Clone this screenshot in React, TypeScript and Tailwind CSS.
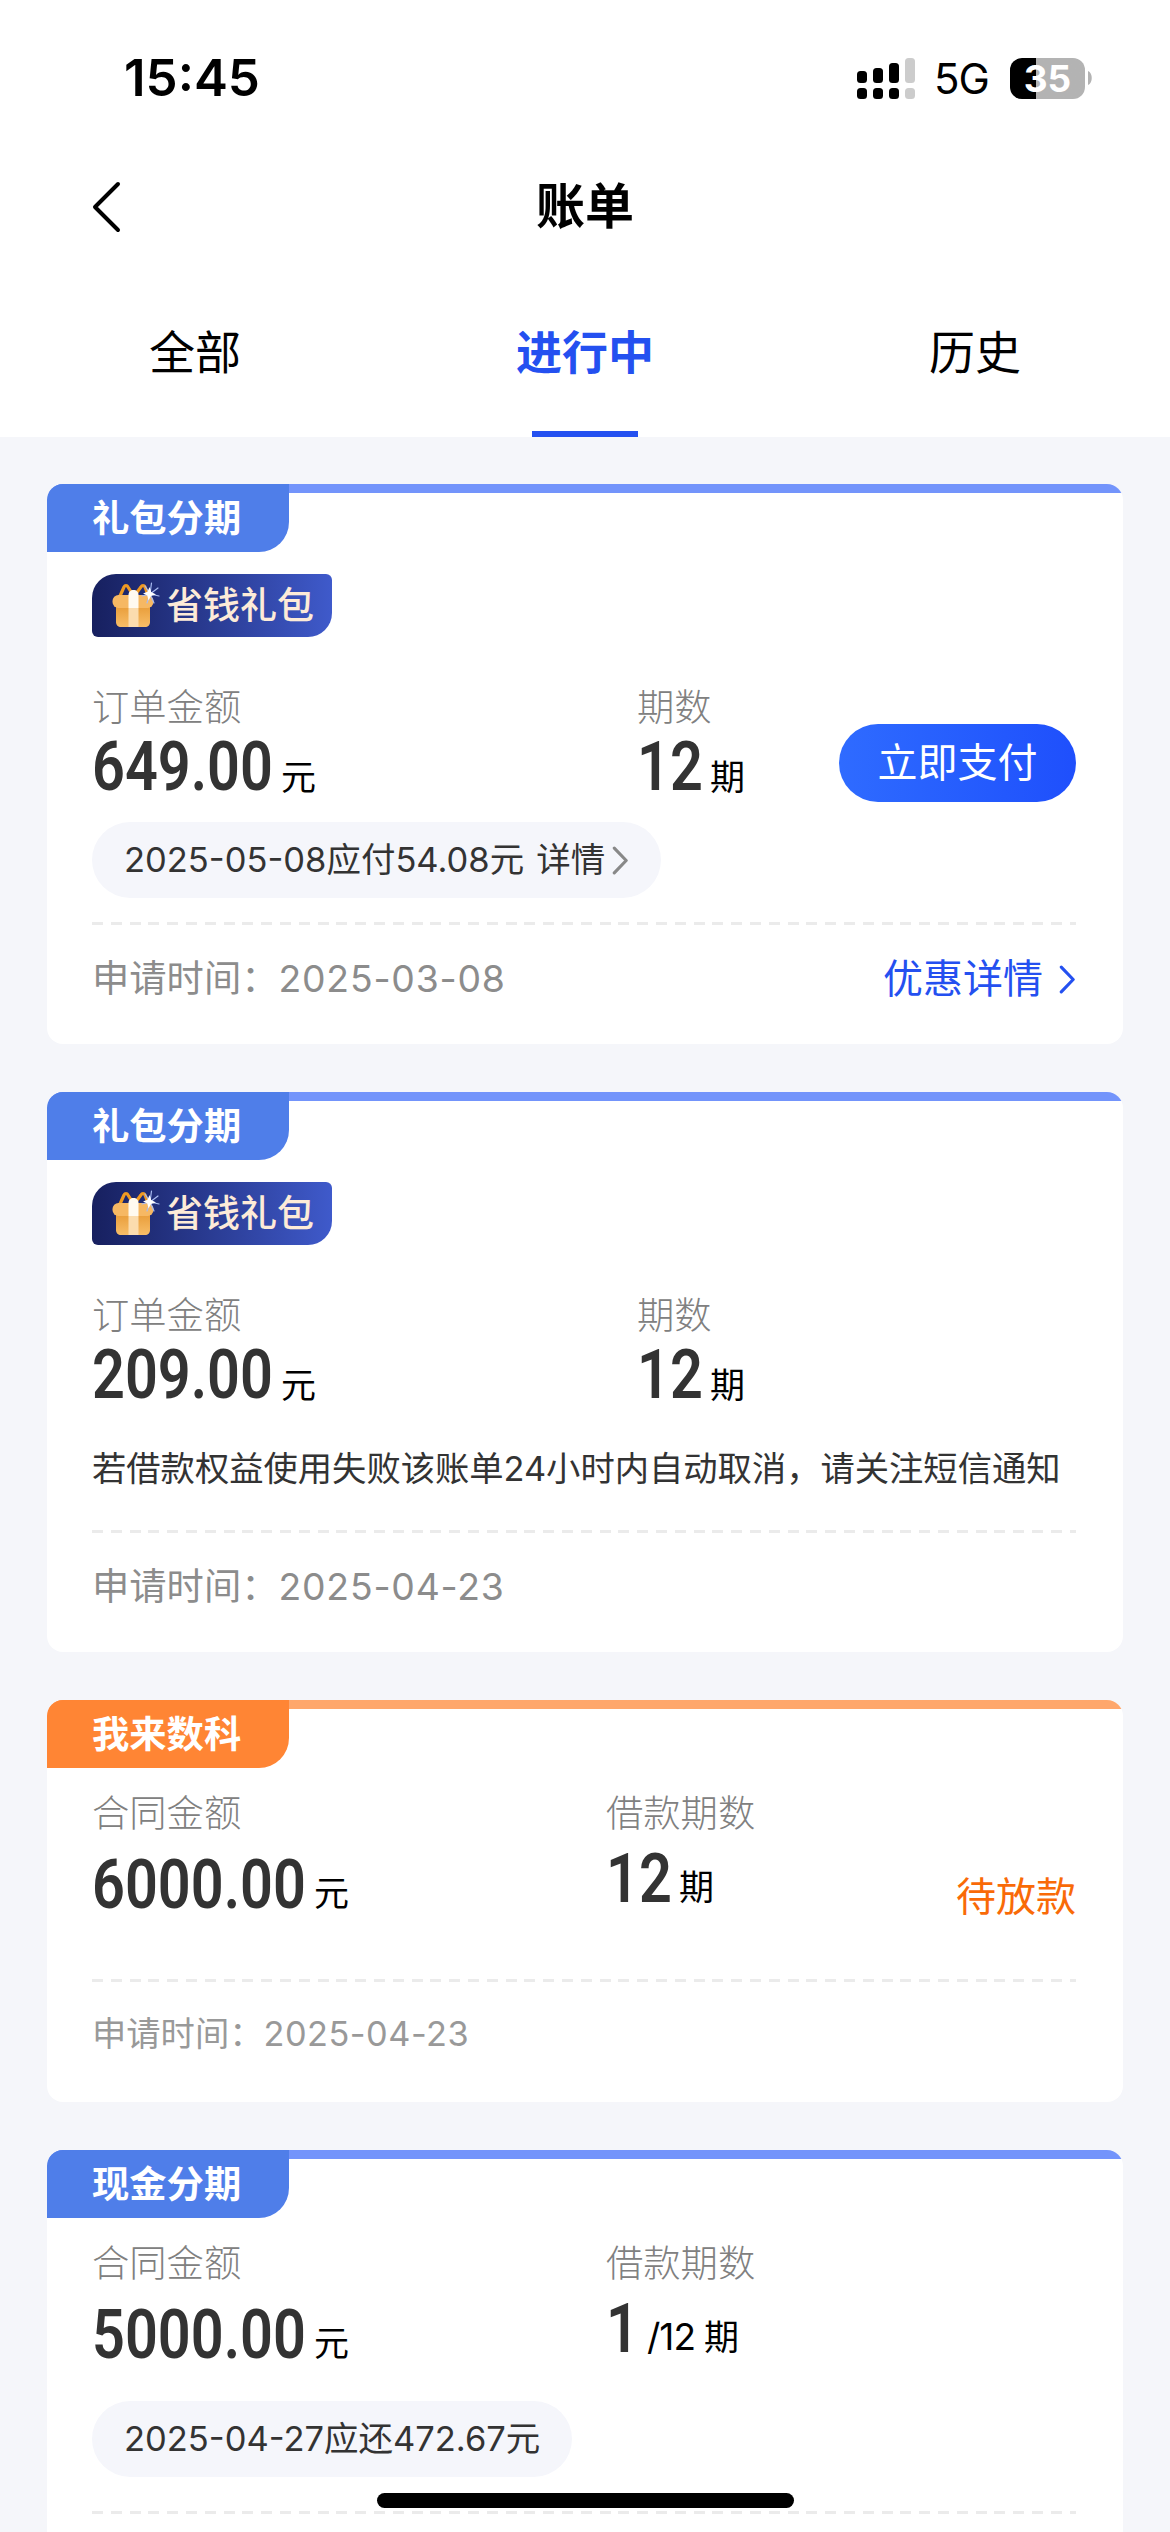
import { useState } from "react";
import clsx from "clsx";

type Bill = {
  id: number;
  kind: "gift" | "loan";
  tag: string;
  tone: "blue" | "orange";
  amount: string;
  amountWidth: string;
  periods: string;
  periodsWidth: string;
  totalPeriods?: string;
  due?: string;
  hasDetail?: boolean;
  notice?: string;
  canPay?: boolean;
  status?: string;
  date?: string;
  promo?: boolean;
};

const bills: Bill[] = [
  {
    id: 1,
    kind: "gift",
    tag: "礼包分期",
    tone: "blue",
    amount: "649.00",
    amountWidth: "w-[182px]",
    periods: "12",
    periodsWidth: "w-[66px]",
    due: "2025-05-08应付54.08元",
    hasDetail: true,
    canPay: true,
    date: "2025-03-08",
    promo: true,
  },
  {
    id: 2,
    kind: "gift",
    tag: "礼包分期",
    tone: "blue",
    amount: "209.00",
    amountWidth: "w-[182px]",
    periods: "12",
    periodsWidth: "w-[66px]",
    notice: "若借款权益使用失败该账单24小时内自动取消，请关注短信通知",
    date: "2025-04-23",
  },
  {
    id: 3,
    kind: "loan",
    tag: "我来数科",
    tone: "orange",
    amount: "6000.00",
    amountWidth: "w-[215px]",
    periods: "12",
    periodsWidth: "w-[66px]",
    status: "待放款",
    date: "2025-04-23",
  },
  {
    id: 4,
    kind: "loan",
    tag: "现金分期",
    tone: "blue",
    amount: "5000.00",
    amountWidth: "w-[215px]",
    periods: "1",
    periodsWidth: "w-[33px]",
    totalPeriods: "/12",
    due: "2025-04-27应还472.67元",
  },
];

const tabs = ["全部", "进行中", "历史"];

function Chevron({ className }: { className: string }) {
  return (
    <svg viewBox="0 0 16 28" fill="none" stroke="currentColor" className={className}>
      <path d="M2 2l11.5 12L2 26" strokeWidth="3" strokeLinecap="round" strokeLinejoin="round" />
    </svg>
  );
}

function StatusBar() {
  return (
    <div className="flex h-[156px] items-center justify-between pr-[77px] pl-[124px]">
      <span className="text-[51px] leading-[50px] font-semibold">15:45</span>
      <div className="flex items-center">
        <svg width="58" height="41" viewBox="0 0 58 41">
          <rect x="0" y="13" width="10" height="12" rx="3.5" />
          <rect x="16" y="10" width="10" height="15" rx="3.5" />
          <rect x="32" y="5" width="10" height="20" rx="3.5" />
          <rect x="48" y="0" width="10" height="25" rx="3.5" fill="#cccccc" />
          <rect x="0" y="30" width="10" height="11" rx="3.5" />
          <rect x="16" y="30" width="10" height="11" rx="3.5" />
          <rect x="32" y="30" width="10" height="11" rx="3.5" />
          <rect x="48" y="30" width="10" height="11" rx="3.5" fill="#cccccc" />
        </svg>
        <span className="ml-[19px] w-[55px] pt-[2px] text-[42px] leading-[42px] tracking-[-1px]">5G</span>
        <div className="ml-[21px] flex h-[41px] w-[75px] items-center justify-center rounded-[12px] bg-linear-to-r from-black from-35% to-[#b3b3b3] to-35%">
          <span className="text-[37px] leading-[41px] font-bold text-white">35</span>
        </div>
        <svg width="5" height="14" viewBox="0 0 5 14" className="ml-[3px]">
          <path d="M0 0c5 2 5 12 0 14z" fill="#b3b3b3" />
        </svg>
      </div>
    </div>
  );
}

function GiftIcon() {
  return (
    <svg width="48" height="48" viewBox="0 0 48 48" fill="none">
      <defs>
        <linearGradient id="box" x1="0" y1="0" x2="0" y2="1">
          <stop offset="0" stopColor="#e79a35" />
          <stop offset="1" stopColor="#f7bd68" />
        </linearGradient>
      </defs>
      <path d="M8 14l4-9c1-2 3-2 4 0l5 8M23 13l6-8c1-2 3-2 4 0l3 8" stroke="#f09a22" strokeWidth="3.2" />
      <path d="M4 22h34v18c0 3-2 5-5 5H9c-3 0-5-2-5-5z" fill="url(#box)" />
      <rect x="0.5" y="13" width="41" height="13" rx="6" fill="#f6b863" />
      <path d="M16.5 26h10v19h-10z" fill="#fbdcae" />
      <path d="M16.500 26V13c0-3 2-5 5-5s5 2 5 5v13z" fill="#fffaf0" />
      <path d="M38 12L39.500 1M38 12l8-6M38 12l9 2M38 12l4 9M38 12l-3 9M38 12l-8 2M38 12l-5-8" stroke="#a9bcf2" strokeWidth="1.2" strokeLinecap="round" />
      <path d="M37.500 5l1.700 5 4.800 2.500-5 1.500-2.500 4.500-1.200-5-4.300-2 4.500-1.800z" fill="#fff" />
    </svg>
  );
}

function Figure({ value, width }: { value: string; width: string }) {
  return (
    <span className={clsx("h-[68px]", width)}>
      <span className="inline-block origin-left scale-x-[0.835] font-[Roboto,sans-serif] text-[69px] leading-[68px] font-semibold text-[#333333]">
        {value}
      </span>
    </span>
  );
}

function BillCard({ bill }: { bill: Bill }) {
  const gift = bill.kind === "gift";
  const orange = bill.tone === "orange";

  return (
    <section
      className={clsx(
        "shrink-0 overflow-hidden rounded-[16px] bg-white",
        gift ? "h-[560px]" : "h-[402px]",
      )}
    >
      <div
        className={clsx(
          "h-[68px] bg-size-[100%_9px] bg-no-repeat",
          orange
            ? "bg-linear-to-r from-[#fea76c] to-[#fea76c]"
            : "bg-linear-to-r from-[#7394fb] to-[#7394fb]",
        )}
      >
        <div
          className={clsx(
            "flex h-[68px] w-[242px] items-center rounded-br-[30px] pt-[2px] pl-[45px] text-[37.300px] leading-[66px] font-bold text-white",
            orange ? "bg-[#ff8534]" : "bg-[#4f7ee9]",
          )}
        >
          {bill.tag}
        </div>
      </div>

      <div className="pr-[47px] pl-[45px]">
        {gift && (
          <div className="mt-[22px] flex h-[63px] w-[240px] items-center rounded-tl-[24px] rounded-tr-[6px] rounded-br-[24px] rounded-bl-[6px] bg-linear-to-r from-[#17205f] to-[#3f5acb] pl-[20px]">
            <GiftIcon />
            <span className="ml-[6px] text-[37px] leading-[60px] font-medium text-[#fdebd8]">省钱礼包</span>
          </div>
        )}

        <div className={clsx("flex", gift ? "mt-[43px] h-[120px]" : "mt-[18px] h-[132px]")}>
          <div className={gift ? "w-[545px]" : "w-[514px]"}>
            <p className="h-[52px] pt-[2px] text-[37.300px] leading-[52px] font-light text-[#808080]">
              {gift ? "订单金额" : "合同金额"}
            </p>
            <div className={clsx("flex items-baseline", gift ? "mt-px" : "mt-[13px]")}>
              <Figure value={bill.amount} width={bill.amountWidth} />
              <span className={clsx("ml-[7px] text-[35px] leading-[35px]", !gift && "-translate-y-[2px]")}>元</span>
            </div>
          </div>
          <div>
            <p className="h-[52px] pt-[2px] text-[37.300px] leading-[52px] font-light text-[#808080]">
              {gift ? "期数" : "借款期数"}
            </p>
            <div className={clsx("flex items-baseline", gift ? "mt-px" : "mt-[7px]")}>
              <Figure value={bill.periods} width={bill.periodsWidth} />
              {bill.totalPeriods && (
                <span className="ml-[8px] w-[50px] -translate-y-[2px] text-[37px] leading-[37px] tracking-[-1px]">
                  {bill.totalPeriods}
                </span>
              )}
              <span className={clsx("ml-[7px] text-[35px] leading-[35px]", !gift && "-translate-y-[2px]")}>期</span>
            </div>
          </div>
          {bill.canPay && (
            <button className="mt-[44px] ml-auto h-[78px] w-[237px] rounded-full bg-linear-to-r from-[#2f6bff] to-[#1f4ffc] text-[40px] leading-[76px] text-white">
              立即支付
            </button>
          )}
          {bill.status && (
            <span className="mt-[81px] ml-auto text-[40px] leading-[60px] text-[#f96a07]">{bill.status}</span>
          )}
        </div>

        <div className={clsx("flex", gift ? "mt-[22px] h-[100px]" : bill.due ? "mt-[33px] h-[110px]" : "h-[61px]")}>
          {bill.due && (
            <div className="flex h-[76px] items-center rounded-full bg-[#f5f6fb] px-[32px] text-[34.500px] whitespace-nowrap text-[#333333]">
              {bill.due}
              {bill.hasDetail && (
                <>
                  <span className="ml-[12px]">详情</span>
                  <Chevron className="ml-[7px] h-[29px] w-[17px] text-[#888888]" />
                </>
              )}
            </div>
          )}
          {bill.notice && (
            <p className="text-[34.300px] leading-[78px] whitespace-nowrap text-[#333333]">{bill.notice}</p>
          )}
        </div>

        <div className="h-[3px] bg-[repeating-linear-gradient(90deg,#ebebeb_0_11px,transparent_11px_18.800px)]" />

        {bill.date && (
          <div
            className={clsx(
              "flex items-center justify-between",
              gift
                ? "h-[119px] pb-[11px] text-[37.300px] text-[#8c8c8c]"
                : "h-[120px] pb-[16px] text-[34.300px] text-[#999999]",
            )}
          >
            <span>
              申请时间：<span className={clsx(gift ? "tracking-[0.8px]" : "tracking-[0.5px]")}>{bill.date}</span>
            </span>
            {bill.promo && (
              <a className="flex items-center text-[40px] text-[#2450f0]">
                优惠详情
                <Chevron className="ml-[16px] h-[29px] w-[17px]" />
              </a>
            )}
          </div>
        )}
      </div>
    </section>
  );
}

export default function App() {
  const [active, setActive] = useState("进行中");

  return (
    <div className="relative flex h-[2532px] w-[1170px] flex-col overflow-hidden bg-[#f5f6fa] font-[Inter,'Noto_Sans_CJK_SC',sans-serif] text-black">
      <header className="h-[437px] shrink-0 bg-white">
        <StatusBar />
        <div className="grid h-[102px] grid-cols-3 items-center">
          <svg width="30" height="52" viewBox="0 0 30 52" fill="none" className="ml-[91px]">
            <path d="M27 3L4 26l23 23" stroke="#000" strokeWidth="4" strokeLinecap="round" strokeLinejoin="round" />
          </svg>
          <h1 className="text-center text-[49px] leading-[60px] font-bold">账单</h1>
        </div>
        <nav className="grid h-[179px] grid-cols-3">
          {tabs.map((tab) => (
            <button
              key={tab}
              onClick={() => setActive(tab)}
              className="flex flex-col items-center justify-between pt-[64px] text-[46px] leading-[60px]"
            >
              <span className={clsx(tab === active && "font-bold text-[#2450f0]")}>{tab}</span>
              <span className={clsx("h-[6px] w-[106px]", tab === active && "bg-[#2450f0]")} />
            </button>
          ))}
        </nav>
      </header>

      <main className="flex flex-col gap-12 pt-[47px] pr-[47px] pl-[47px]">
        {bills.map((bill) => (
          <BillCard key={bill.id} bill={bill} />
        ))}
      </main>

      <div className="absolute bottom-[24px] left-[377px] h-[15px] w-[417px] rounded-full bg-black" />
    </div>
  );
}
